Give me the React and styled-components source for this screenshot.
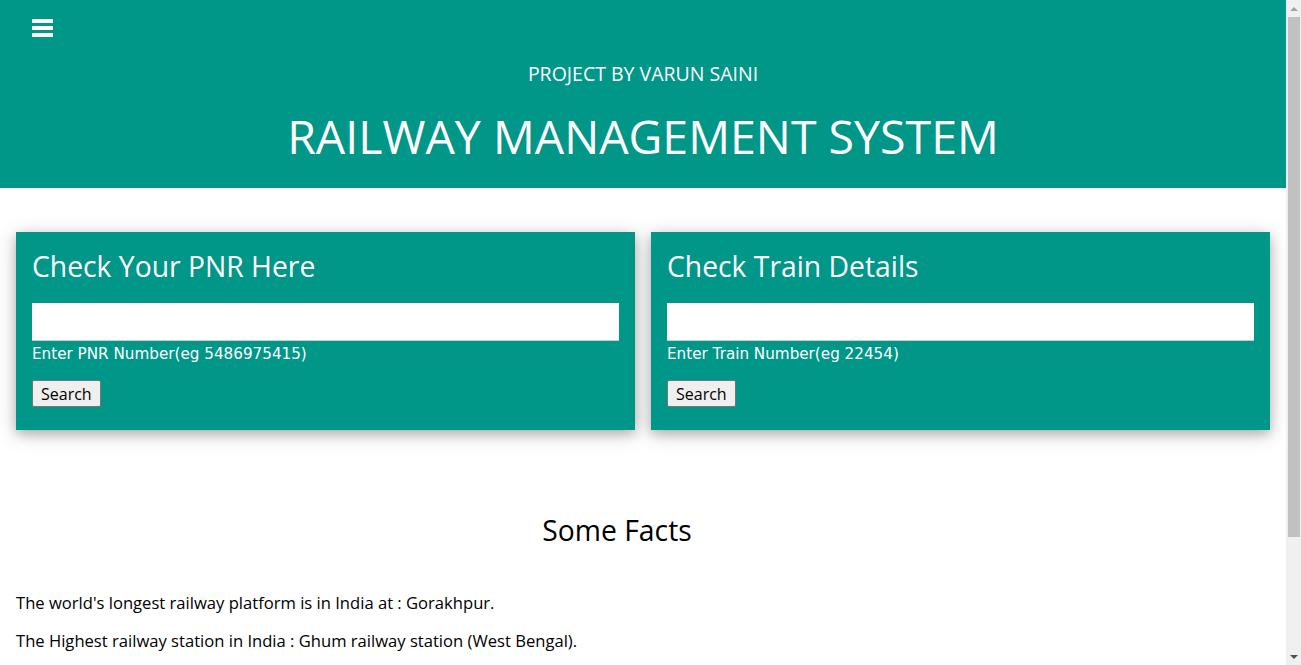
import React from "react";
import styled, { createGlobalStyle } from "styled-components";

const Global = createGlobalStyle`
  html, body { margin: 0; padding: 0; height: 100%; overflow: hidden; }
  body {
    background: #fff;
    font-family: "Open Sans", "Noto Sans", sans-serif;
    font-size: 15px;
    color: #000;
  }
`;

const teal = "#009688";

const Window = styled.div`
  display: flex;
  height: 100vh;
`;

const Main = styled.main`
  flex: 1;
  min-width: 0;
  overflow: hidden;
`;

/* drawn browser scrollbar */
const ScrollBar = styled.div`
  width: 15px;
  flex: none;
  background: #f0f0f0;
  display: flex;
  flex-direction: column;
`;

const ScrollArrow = styled.div`
  height: 17px;
  flex: none;
  display: flex;
  align-items: center;
  justify-content: center;
  padding-left: 1px;

  &::before {
    content: "";
    width: 0;
    height: 0;
    border-left: 4px solid transparent;
    border-right: 4px solid transparent;
    ${(p) =>
      p.$dir === "up"
        ? `border-bottom: 4px solid ${p.$color};`
        : `border-top: 4px solid ${p.$color};`}
  }
`;

const ScrollTrack = styled.div`
  flex: 1;
  padding: 0 1px 0 2px;
`;

const ScrollThumb = styled.div`
  height: 520px;
  background: #c1c1c1;
`;

const Page = styled.div`
  min-height: 800px;
`;

const Header = styled.header`
  background: ${teal};
  color: #fff;
  height: 188px;
  display: flex;
  flex-direction: column;
`;

const MenuBar = styled.div`
  height: 56px;
  display: flex;
  align-items: flex-start;
  padding: 19px 0 0 32px;
  box-sizing: border-box;
`;

const MenuButton = styled.button`
  background: none;
  border: none;
  padding: 0;
  margin: 0;
  display: block;
  cursor: pointer;
  line-height: 0;
`;

const Subtitle = styled.div`
  text-align: center;
  font-family: "Open Sans", sans-serif;
  font-size: 19.5px;
  line-height: 24px;
  margin-top: 6px;
`;

const Title = styled.h1`
  text-align: center;
  font-family: "Open Sans", sans-serif;
  font-weight: 400;
  font-size: 46.5px;
  line-height: 60px;
  margin: 20px 0 0;
`;

const Cards = styled.div`
  display: grid;
  grid-template-columns: 1fr 1fr;
  gap: 16px;
  padding: 44px 16px 0;
`;

const Card = styled.section`
  background: ${teal};
  color: #fff;
  padding: 16px 16px 23px;
  box-shadow: 0 4px 10px 0 rgba(0, 0, 0, 0.2), 0 4px 20px 0 rgba(0, 0, 0, 0.19);
  display: flex;
  flex-direction: column;
  align-items: flex-start;
`;

const CardTitle = styled.h2`
  font-family: "Open Sans", sans-serif;
  font-weight: 400;
  font-size: 28.3px;
  line-height: 36px;
  margin: 0 0 19px;
`;

const Input = styled.input`
  width: 100%;
  box-sizing: border-box;
  height: 38px;
  border: none;
  border-bottom: 1px solid #ccc;
  background: #fff;
  padding: 8px;
  margin: 0;
  font-size: 15px;
  outline: none;
`;

const Label = styled.label`
  font-family: "DejaVu Sans", Verdana, sans-serif;
  font-size: 15.2px;
  line-height: 22px;
  margin-top: 2px;
`;

const Button = styled.button`
  margin-top: 15px;
  height: 27px;
  padding: 0 8px;
  font-family: "Open Sans", sans-serif;
  font-size: 16px;
  color: #000;
  background: #efefef;
  border: 1px solid #767676;
  border-radius: 2px;
`;

const Facts = styled.section`
  padding: 80px 16px 0;
`;

const FactsTitle = styled.h2`
  font-family: "Open Sans", sans-serif;
  font-weight: 400;
  font-size: 28.3px;
  line-height: 40px;
  margin: 0 52px 42px 0;
  text-align: center;
`;

const Fact = styled.p`
  font-family: "Open Sans", sans-serif;
  font-size: 16.6px;
  line-height: 22px;
  margin: 0 0 15px;

  & + & {
    margin-top: 16px;
  }
`;

function MenuIcon() {
  return (
    <svg width="21" height="18" viewBox="0 0 21 18">
      <rect x="0" y="0" width="21" height="4" rx="0.6" fill="#fff" />
      <rect x="0" y="7" width="21" height="4" rx="0.6" fill="#fff" />
      <rect x="0" y="14" width="21" height="4" rx="0.6" fill="#fff" />
    </svg>
  );
}

function SearchCard({ title, label }) {
  return (
    <Card>
      <CardTitle>{title}</CardTitle>
      <Input type="text" />
      <Label>{label}</Label>
      <Button type="button">Search</Button>
    </Card>
  );
}

export default function App() {
  return (
    <Window>
      <Global />
      <Main>
        <Page>
          <Header>
            <MenuBar>
              <MenuButton aria-label="menu">
                <MenuIcon />
              </MenuButton>
            </MenuBar>
            <Subtitle>PROJECT BY VARUN SAINI</Subtitle>
            <Title>RAILWAY MANAGEMENT SYSTEM</Title>
          </Header>
          <Cards>
            <SearchCard title="Check Your PNR Here" label="Enter PNR Number(eg 5486975415)" />
            <SearchCard title="Check Train Details" label="Enter Train Number(eg 22454)" />
          </Cards>
          <Facts>
            <FactsTitle>Some Facts</FactsTitle>
            <Fact>The world's longest railway platform is in India at : Gorakhpur.</Fact>
            <Fact>The Highest railway station in India : Ghum railway station (West Bengal).</Fact>
          </Facts>
        </Page>
      </Main>
      <ScrollBar aria-hidden="true">
        <ScrollArrow $dir="up" $color="#a3a3a3" />
        <ScrollTrack>
          <ScrollThumb />
        </ScrollTrack>
        <ScrollArrow $dir="down" $color="#505050" />
      </ScrollBar>
    </Window>
  );
}
